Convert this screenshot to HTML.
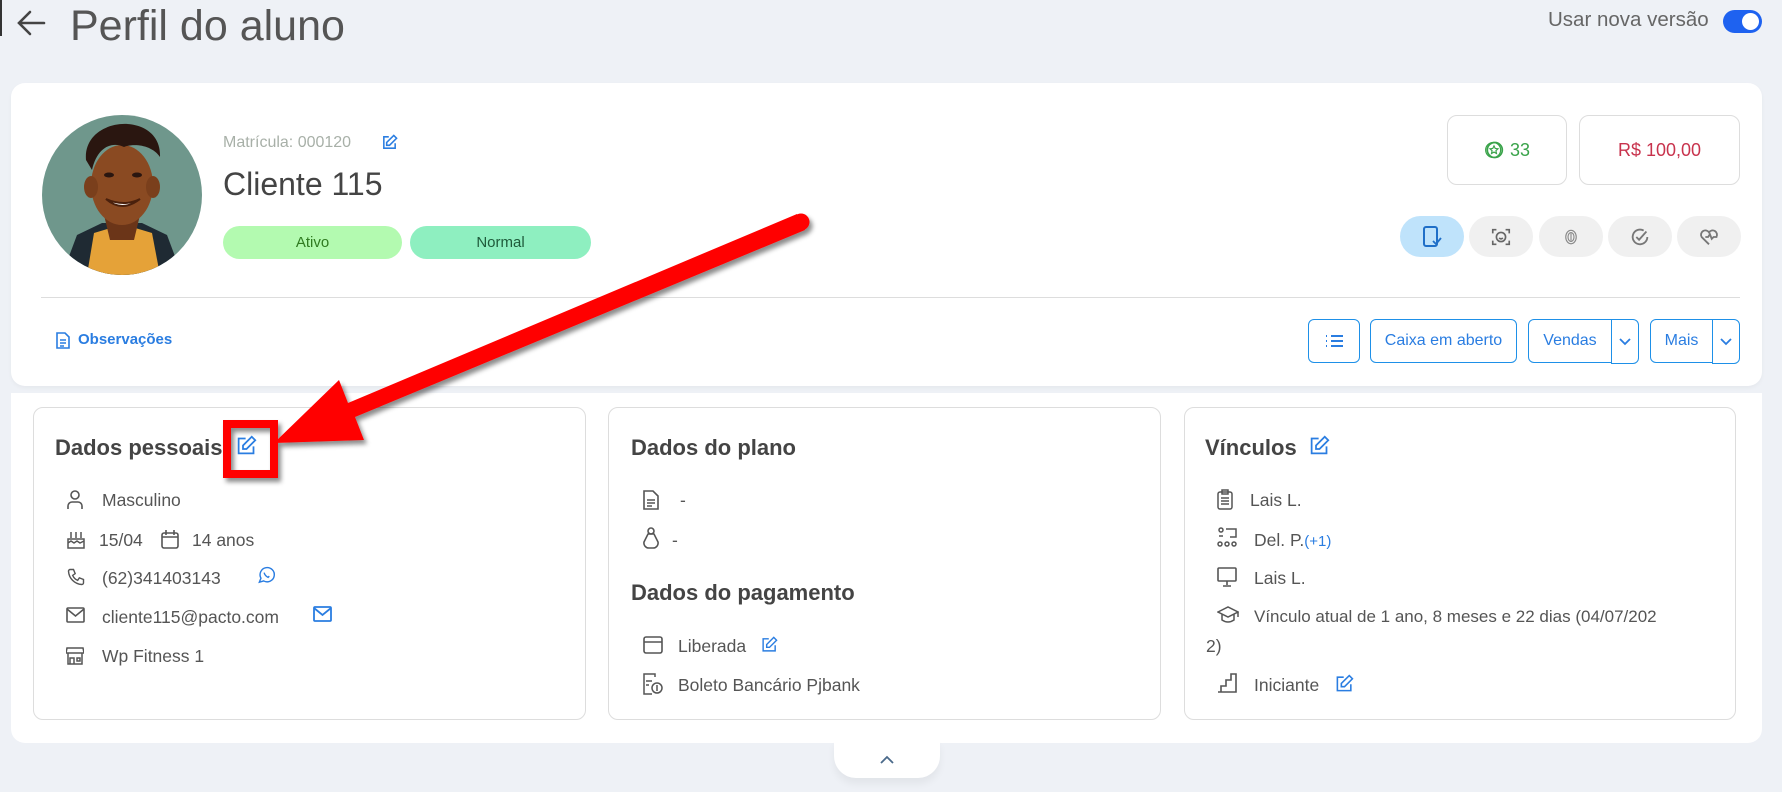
<!DOCTYPE html>
<html><head><meta charset="utf-8"><style>
*{margin:0;padding:0;box-sizing:border-box}
body{width:1782px;height:792px;background:#eef1f6;font-family:"Liberation Sans",sans-serif;position:relative;overflow:hidden;color:#555}
.a{position:absolute}
.card{position:absolute;background:#fff;border-radius:14px}
.box{position:absolute;border:1px solid #ddd;border-radius:10px;background:#fff}
.t{position:absolute;white-space:nowrap}
.h{font-size:22px;font-weight:bold;color:#444}
.r{font-size:17.5px;color:#555}
.btn{position:absolute;border:1px solid #1e90e8;border-radius:6px;color:#2a7de1;font-size:16px;display:flex;align-items:center;justify-content:center;background:#fff}
.pill{position:absolute;top:216px;height:41px;width:64px;border-radius:21px;background:#f0f0f0;display:flex;align-items:center;justify-content:center}
svg.i{position:absolute}
</style></head><body>
<div class="a" style="left:0;top:0;width:2px;height:36px;background:#333"></div>
<svg class="i" style="left:16px;top:8px" width="32" height="30" viewBox="0 0 32 30"><path d="M28 15H4M14 4L3 15l11 11" fill="none" stroke="#444" stroke-width="2.6" stroke-linecap="round"/></svg>
<div class="t" style="left:70px;top:2px;font-size:43px;color:#555">Perfil do aluno</div>
<div class="t" style="left:1548px;top:8px;font-size:20.5px;color:#666">Usar nova versão</div>
<div class="a" style="left:1723px;top:10px;width:39px;height:23px;border-radius:12px;background:#1e62f0"></div>
<div class="a" style="left:1742px;top:13px;width:17px;height:17px;border-radius:50%;background:#fff"></div>

<div class="card" style="left:11px;top:83px;width:1751px;height:303px;box-shadow:0 2px 4px rgba(0,0,0,.04)"></div>
<svg class="i" style="left:42px;top:115px" width="160" height="160" viewBox="0 0 160 160">
<defs><clipPath id="c"><circle cx="80" cy="80" r="80"/></clipPath></defs>
<g clip-path="url(#c)">
<rect width="160" height="160" fill="#6f978c"/>
<path d="M20 160 L35 120 L60 108 L100 108 L125 120 L140 160Z" fill="#1f2a33"/>
<path d="M45 160 L52 118 L72 112 L90 112 L110 118 L118 160Z" fill="#e5a238"/>
<path d="M62 100 L98 100 L92 125 L68 125Z" fill="#6b3518"/>
<ellipse cx="80" cy="70" rx="31" ry="40" fill="#8a4a22"/>
<ellipse cx="49" cy="72" rx="7" ry="11" fill="#7a3f1c"/>
<ellipse cx="111" cy="72" rx="7" ry="11" fill="#7a3f1c"/>
<path d="M44 45 C40 0 120 -5 118 42 C110 30 92 28 82 32 C70 26 55 32 50 55Z" fill="#2a1610"/>
<path d="M64 84 Q80 98 98 84 Q82 92 64 84Z" fill="#fff" stroke="#4a200c" stroke-width="2"/>
<ellipse cx="67" cy="60" rx="5" ry="2.5" fill="#2a1610"/><ellipse cx="95" cy="60" rx="5" ry="2.5" fill="#2a1610"/>
</g></svg>
<div class="t" style="left:223px;top:134px;font-size:16px;color:#a8b0a8">Matrícula: 000120</div>
<svg class="i" style="left:381px;top:134px" width="17" height="17" viewBox="0 0 24 24"><path d="M11 4H4v16h16v-7M18 2l4 4-10 10H8v-4z" fill="none" stroke="#2a7de1" stroke-width="2.2"/></svg>
<div class="t" style="left:223px;top:166px;font-size:32px;color:#444">Cliente 115</div>
<div class="a" style="left:223px;top:226px;width:179px;height:33px;border-radius:17px;background:#b3fab0;color:#2f7a20;font-size:15px;text-align:center;line-height:33px">Ativo</div>
<div class="a" style="left:410px;top:226px;width:181px;height:33px;border-radius:17px;background:#8eefc0;color:#1e5a3a;font-size:15px;text-align:center;line-height:33px">Normal</div>

<div class="box" style="left:1447px;top:115px;width:120px;height:70px;color:#3aa34a;font-size:18px;display:flex;align-items:center;justify-content:center"><svg width="20" height="20" viewBox="0 0 24 24" style="margin-right:6px"><circle cx="13" cy="12" r="9" fill="none" stroke="#3aa34a" stroke-width="2"/><circle cx="11" cy="12" r="9" fill="none" stroke="#3aa34a" stroke-width="1.5"/><path d="M12 7l1.5 3.2 3.3.4-2.5 2.3.7 3.3-3-1.7-3 1.7.7-3.3-2.5-2.3 3.3-.4z" fill="none" stroke="#3aa34a" stroke-width="1.4"/></svg>33</div>
<div class="box" style="left:1579px;top:115px;width:161px;height:70px;color:#c8334d;font-size:18px;display:flex;align-items:center;justify-content:center">R$ 100,00</div>

<div class="pill" style="left:1400px;background:#bfe3fb"><svg width="22" height="24" viewBox="0 0 22 24"><rect x="3" y="2" width="13" height="19" rx="2" fill="none" stroke="#1f6fc8" stroke-width="2"/><path d="M12 16l3 3 5-6" fill="none" stroke="#1f6fc8" stroke-width="1.8"/></svg></div>
<div class="pill" style="left:1469px"><svg width="22" height="22" viewBox="0 0 24 24" fill="none" stroke="#666" stroke-width="1.8"><path d="M3 8V4h4M17 4h4v4M21 16v4h-4M7 20H3v-4"/><circle cx="12" cy="12" r="5"/><path d="M10 13q2 2 4 0"/></svg></div>
<div class="pill" style="left:1539px"><svg width="18" height="20" viewBox="0 0 24 24" fill="none" stroke="#888" stroke-width="1.5"><ellipse cx="12" cy="12" rx="7" ry="9"/><ellipse cx="12" cy="12" rx="4" ry="6"/><path d="M12 7v10"/></svg></div>
<div class="pill" style="left:1608px"><svg width="22" height="22" viewBox="0 0 24 24" fill="none" stroke="#777" stroke-width="2"><path d="M20 12a8 8 0 1 1-4-7"/><path d="M8 12l3 3 8-9"/></svg></div>
<div class="pill" style="left:1677px"><svg width="24" height="22" viewBox="0 0 24 24" fill="none" stroke="#777" stroke-width="2"><path d="M12 20L4 12a4.5 4.5 0 0 1 8-5 4.5 4.5 0 0 1 8 5"/><path d="M8 12h3l2-3 2 5 2-2h4"/></svg></div>

<div class="a" style="left:41px;top:297px;width:1699px;height:1px;background:#ddd"></div>
<svg class="i" style="left:56px;top:332px" width="14" height="17" viewBox="0 0 14 17" fill="none" stroke="#2a7de1" stroke-width="1.6"><path d="M1 1h8l4 4v11H1z M4 8h6M4 11h6M4 14h4"/></svg>
<div class="t" style="left:78px;top:331px;font-size:15px;font-weight:bold;color:#2a7de1">Observações</div>

<div class="btn" style="left:1308px;top:319px;width:52px;height:44px"><svg width="20" height="16" viewBox="0 0 20 16" stroke="#2a7de1" stroke-width="2"><path d="M7 3h12M7 8h12M7 13h12M2 3h1M2 8h1M2 13h1"/></svg></div>
<div class="btn" style="left:1370px;top:319px;width:147px;height:44px">Caixa em aberto</div>
<div class="btn" style="left:1528px;top:319px;width:84px;height:44px;border-radius:6px 0 0 6px">Vendas</div>
<div class="btn" style="left:1611px;top:319px;width:28px;height:45px;border-radius:0 6px 6px 0"><svg width="12" height="8" viewBox="0 0 12 8"><path d="M1 1l5 5 5-5" fill="none" stroke="#2a7de1" stroke-width="1.8"/></svg></div>
<div class="btn" style="left:1650px;top:319px;width:63px;height:44px;border-radius:6px 0 0 6px">Mais</div>
<div class="btn" style="left:1712px;top:319px;width:28px;height:45px;border-radius:0 6px 6px 0"><svg width="12" height="8" viewBox="0 0 12 8"><path d="M1 1l5 5 5-5" fill="none" stroke="#2a7de1" stroke-width="1.8"/></svg></div>

<div class="card" style="left:11px;top:393px;width:1751px;height:350px;border-radius:0 0 14px 14px"></div>
<div class="a" style="left:834px;top:740px;width:106px;height:38px;background:#fff;border-radius:0 0 22px 22px;box-shadow:0 6px 8px rgba(0,0,0,.05)"></div>
<svg class="i" style="left:880px;top:755px" width="14" height="9" viewBox="0 0 14 9"><path d="M1 8l6-6 6 6" fill="none" stroke="#4a6a8a" stroke-width="1.8"/></svg>

<div class="box" style="left:33px;top:407px;width:553px;height:313px"></div>
<div class="box" style="left:608px;top:407px;width:553px;height:313px"></div>
<div class="box" style="left:1184px;top:407px;width:552px;height:313px"></div>

<!-- card 1 -->
<div class="t h" style="left:55px;top:435px">Dados pessoais</div>
<svg class="i" style="left:236px;top:435px" width="21" height="21" viewBox="0 0 24 24"><path d="M11 4H3v17h17v-8M18 2l4 4-10 10H8v-4z" fill="none" stroke="#2a7de1" stroke-width="2"/></svg>
<svg class="i" style="left:66px;top:490px" width="18" height="20" viewBox="0 0 18 20" fill="none" stroke="#555" stroke-width="1.6"><circle cx="9" cy="5" r="4"/><path d="M2 19v-3a4 4 0 0 1 4-4h6a4 4 0 0 1 4 4v3"/></svg>
<div class="t r" style="left:102px;top:490px">Masculino</div>
<svg class="i" style="left:66px;top:529px" width="20" height="20" viewBox="0 0 20 20" fill="none" stroke="#555" stroke-width="1.5"><path d="M2 19h16v-9H2z M2 14l3-2 3 2 3-2 3 2 4-2M5 9V3M10 9V3M15 9V3"/></svg>
<div class="t r" style="left:99px;top:530px">15/04</div>
<svg class="i" style="left:161px;top:529px" width="18" height="20" viewBox="0 0 18 20" fill="none" stroke="#555" stroke-width="1.6"><rect x="1" y="4" width="16" height="15" rx="2"/><path d="M1 8h16M5 1v5M13 1v5"/></svg>
<div class="t r" style="left:192px;top:530px">14 anos</div>
<svg class="i" style="left:66px;top:567px" width="20" height="20" viewBox="0 0 24 24" fill="none" stroke="#555" stroke-width="1.7"><path d="M5 3h4l2 5-3 2a11 11 0 0 0 6 6l2-3 5 2v4a2 2 0 0 1-2 2A17 17 0 0 1 3 5a2 2 0 0 1 2-2"/></svg>
<div class="t r" style="left:102px;top:568px">(62)341403143</div>
<svg class="i" style="left:257px;top:565px" width="19" height="20" viewBox="0 0 24 24" fill="none" stroke="#2a7de1" stroke-width="1.8"><path d="M3 21l2-5a9 9 0 1 1 3.5 3.5z"/><path d="M9 9q1 4 5 6l1.5-1.5"/></svg>
<svg class="i" style="left:66px;top:607px" width="19" height="16" viewBox="0 0 19 16" fill="none" stroke="#555" stroke-width="1.6"><rect x="1" y="1" width="17" height="14" rx="1"/><path d="M1 2l8.5 7L18 2"/></svg>
<div class="t r" style="left:102px;top:607px">cliente115@pacto.com</div>
<svg class="i" style="left:313px;top:606px" width="19" height="16" viewBox="0 0 19 16" fill="none" stroke="#2a7de1" stroke-width="1.8"><rect x="1" y="1" width="17" height="14" rx="1"/><path d="M1 2l8.5 7L18 2"/></svg>
<svg class="i" style="left:66px;top:645px" width="18" height="20" viewBox="0 0 18 20" fill="none" stroke="#555" stroke-width="1.5"><path d="M2 8v11h14V8M1 3h16l1 5H0z M4 19v-6h4v6M11 13h3v3h-3z"/></svg>
<div class="t r" style="left:102px;top:646px">Wp Fitness 1</div>

<!-- card 2 -->
<div class="t h" style="left:631px;top:435px">Dados do plano</div>
<svg class="i" style="left:643px;top:490px" width="16" height="20" viewBox="0 0 16 20" fill="none" stroke="#555" stroke-width="1.6"><path d="M1 1h9l5 5v13H1z M4 10h8M4 13h8M4 16h5"/></svg>
<div class="t r" style="left:680px;top:490px">-</div>
<svg class="i" style="left:643px;top:527px" width="16" height="22" viewBox="0 0 16 22" fill="none" stroke="#555" stroke-width="1.6"><circle cx="8" cy="4" r="3"/><path d="M5 7h6l4 8a5 5 0 0 1-5 6H6a5 5 0 0 1-5-6z"/></svg>
<div class="t r" style="left:672px;top:530px">-</div>
<div class="t h" style="left:631px;top:580px">Dados do pagamento</div>
<svg class="i" style="left:643px;top:636px" width="20" height="18" viewBox="0 0 20 18" fill="none" stroke="#555" stroke-width="1.6"><rect x="1" y="1" width="18" height="16" rx="2"/><path d="M1 6h18"/></svg>
<div class="t r" style="left:678px;top:636px">Liberada</div>
<svg class="i" style="left:761px;top:636px" width="17" height="17" viewBox="0 0 24 24"><path d="M11 4H3v17h17v-8M18 2l4 4-10 10H8v-4z" fill="none" stroke="#2a7de1" stroke-width="2"/></svg>
<svg class="i" style="left:643px;top:673px" width="20" height="22" viewBox="0 0 20 22" fill="none" stroke="#555" stroke-width="1.5"><path d="M12 4V1H1v20h8M3 8h6M3 12h3"/><circle cx="14" cy="15" r="5"/><path d="M14 12v6"/></svg>
<div class="t r" style="left:678px;top:675px">Boleto Bancário Pjbank</div>

<!-- card 3 -->
<div class="t h" style="left:1205px;top:435px">Vínculos</div>
<svg class="i" style="left:1309px;top:435px" width="21" height="21" viewBox="0 0 24 24"><path d="M11 4H3v17h17v-8M18 2l4 4-10 10H8v-4z" fill="none" stroke="#2a7de1" stroke-width="2"/></svg>
<svg class="i" style="left:1217px;top:489px" width="16" height="21" viewBox="0 0 16 21" fill="none" stroke="#555" stroke-width="1.5"><rect x="1" y="3" width="14" height="17" rx="2"/><rect x="5" y="1" width="6" height="4"/><path d="M4 9h8M4 12h8M4 15h8"/></svg>
<div class="t r" style="left:1250px;top:490px">Lais L.</div>
<svg class="i" style="left:1217px;top:527px" width="21" height="21" viewBox="0 0 21 21" fill="none" stroke="#555" stroke-width="1.5"><circle cx="4" cy="3" r="2"/><path d="M2 9h4M9 2h10v8h-6"/><circle cx="3" cy="17" r="2"/><circle cx="10" cy="17" r="2"/><circle cx="17" cy="17" r="2"/></svg>
<div class="t r" style="left:1254px;top:530px">Del. P.<span style="color:#2a7de1;font-size:15px">(+1)</span></div>
<svg class="i" style="left:1217px;top:567px" width="20" height="20" viewBox="0 0 20 20" fill="none" stroke="#555" stroke-width="1.6"><rect x="1" y="1" width="18" height="13" rx="1"/><path d="M10 14v4M6 19h8"/></svg>
<div class="t r" style="left:1254px;top:568px">Lais L.</div>
<svg class="i" style="left:1217px;top:606px" width="22" height="18" viewBox="0 0 22 18" fill="none" stroke="#555" stroke-width="1.5"><path d="M1 6l10-5 10 5-10 5z M5 8v6q6 4 12 0V8M21 6v5"/></svg>
<div class="t" style="left:1254px;top:607px;font-size:17px">Vínculo atual de 1 ano, 8 meses e 22 dias (04/07/202</div>
<div class="t r" style="left:1206px;top:636px">2)</div>
<svg class="i" style="left:1217px;top:673px" width="20" height="20" viewBox="0 0 20 20" fill="none" stroke="#555" stroke-width="1.6"><path d="M1 19h18V1h-5v6h-5v6H4v6"/></svg>
<div class="t r" style="left:1254px;top:675px">Iniciante</div>
<svg class="i" style="left:1335px;top:674px" width="19" height="19" viewBox="0 0 24 24"><path d="M11 4H3v17h17v-8M18 2l4 4-10 10H8v-4z" fill="none" stroke="#2a7de1" stroke-width="2"/></svg>

<!-- annotation -->
<svg class="i" style="left:0;top:0" width="1782" height="792" viewBox="0 0 1782 792">
<defs><filter id="s" x="-20%" y="-20%" width="140%" height="140%"><feDropShadow dx="3" dy="4" stdDeviation="2.5" flood-color="#000" flood-opacity=".45"/></filter></defs>
<g filter="url(#s)">
<rect x="227" y="424" width="47" height="50" fill="none" stroke="#f00" stroke-width="8"/>
<polygon points="797,214 805,230 355,417 364,440 274,443 339,380 348,403" fill="#f00"/>
<circle cx="801" cy="222" r="8.5" fill="#f00"/>
</g>
</svg>
</body></html>
